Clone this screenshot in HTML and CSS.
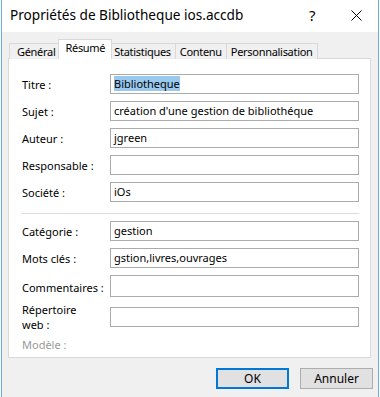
FILE: index.html
```html
<!DOCTYPE html>
<html lang="fr">
<head>
    <meta charset="UTF-8">
    <title>Propriétés de Bibliotheque ios.accdb</title>
    <link rel="stylesheet" href="styles.css">
</head>
<body>

<div class="window">
    <div class="titlebar">
        <span class="title">Propriétés de Bibliotheque ios.accdb</span>
        <span class="help">?</span>
        <span class="close">
            <svg width="11" height="11" viewBox="0 0 11 11"><path d="M0.5 0.5 L10.5 10.5 M10.5 0.5 L0.5 10.5" stroke="#000" stroke-width="1"/></svg>
        </span>
    </div>

    <div class="body">
        <div class="tabs">
            <div class="tab first">Général</div>
            <div class="tab active">Résumé</div>
            <div class="tab">Statistiques</div>
            <div class="tab">Contenu</div>
            <div class="tab">Personnalisation</div>
        </div>

        <div class="panel">
            <div class="form">
                <label>Titre :</label>
                <div class="field"><span class="selected">Bibliotheque</span></div>

                <label>Sujet :</label>
                <div class="field">création d'une gestion de bibliothéque</div>

                <label>Auteur :</label>
                <div class="field">jgreen</div>

                <label>Responsable :</label>
                <div class="field"></div>

                <label>Société :</label>
                <div class="field">iOs</div>
            </div>

            <div class="separator"></div>

            <div class="form">
                <label>Catégorie :</label>
                <div class="field">gestion</div>

                <label>Mots clés :</label>
                <div class="field">gstion,livres,ouvrages</div>

                <label>Commentaires :</label>
                <div class="field tall"></div>

                <label class="two-lines">Répertoire<br>web :</label>
                <div class="field top"></div>

                <label class="disabled">Modèle :</label>
                <div></div>
            </div>
        </div>

        <div class="buttons">
            <div class="btn default">OK</div>
            <div class="btn">Annuler</div>
        </div>
    </div>
</div>

</body>
</html>
```

FILE: styles.css
```css
body {
    margin: 0;
    background-color: #FFFFFF;
    font-family: "Noto Sans", "Liberation Sans", sans-serif;
    color: #000000;
}

.window {
    width: 378px;
    height: 397px;
    margin-left: 1px;
    box-sizing: border-box;
    border-left: 1px solid #6AAEE6;
    border-right: 1px solid #6AAEE6;
    background-color: #F0F0F0;
    display: flex;
    flex-direction: column;
}

.titlebar {
    height: 32px;
    background-color: #FFFFFF;
    display: flex;
    align-items: center;
    padding-left: 8px;
    position: relative;
}

.title {
    font-size: 13.6px;
    margin-top: -3px;
}

.help {
    position: absolute;
    left: 307px;
    top: 5px;
    font-size: 15px;
}

.close {
    position: absolute;
    left: 349px;
    top: 10px;
    line-height: 0;
}

.body {
    flex: 1;
    display: flex;
    flex-direction: column;
}

.tabs {
    display: flex;
    align-items: flex-end;
    height: 27px;
    padding-left: 7px;
    margin-bottom: -1px;
    position: relative;
    z-index: 1;
}

.tab {
    height: 15px;
    line-height: 15px;
    padding: 0 4px;
    font-size: 11px;
    letter-spacing: -0.3px;
    border: 1px solid #D9D9D9;
    border-bottom: none;
    margin-left: -1px;
    background-color: #F0F0F0;
    white-space: nowrap;
}

.tab.first {
    margin-left: 0;
    padding: 0 4px 0 7px;
}

.tab.active {
    height: 19px;
    line-height: 15px;
    background-color: #FFFFFF;
    margin-left: -2px;
    margin-right: -2px;
    padding: 0 6px;
    position: relative;
    z-index: 2;
}

.panel {
    margin: 0 7px 0 6px;
    height: 300px;
    box-sizing: border-box;
    border: 1px solid #D9D9D9;
    background-color: #FFFFFF;
    padding: 15px 11px 0 13px;
}

.form {
    display: grid;
    grid-template-columns: 88px 1fr;
    row-gap: 7px;
    align-items: center;
    font-size: 11px;
}

.form label {
    white-space: nowrap;
}

.form label.two-lines {
    line-height: 15px;
    align-self: start;
    margin-top: -5px;
}

.form label.disabled {
    color: #9A9A9A;
    margin-top: -2px;
}

.field {
    height: 20px;
    box-sizing: border-box;
    border: 1px solid #ABABAB;
    background-color: #FFFFFF;
    padding-left: 3px;
    line-height: 17px;
    white-space: nowrap;
    overflow: hidden;
}

.field.tall {
    height: 22px;
    margin-bottom: 3px;
}

.field.top {
    align-self: start;
}

.selected {
    background-color: #99C9EF;
}

.separator {
    height: 1px;
    background-color: #DCDCDC;
    margin: 11px 0 7px 0;
}

.buttons {
    display: flex;
    justify-content: flex-end;
    gap: 11px;
    padding: 10px 5px 0 0;
}

.btn {
    width: 73px;
    height: 21px;
    box-sizing: border-box;
    border: 1px solid #ADADAD;
    background-color: #E1E1E1;
    font-size: 12px;
    display: flex;
    justify-content: center;
    align-items: center;
}

.btn.default {
    border: 2px solid #0078D7;
}
```
